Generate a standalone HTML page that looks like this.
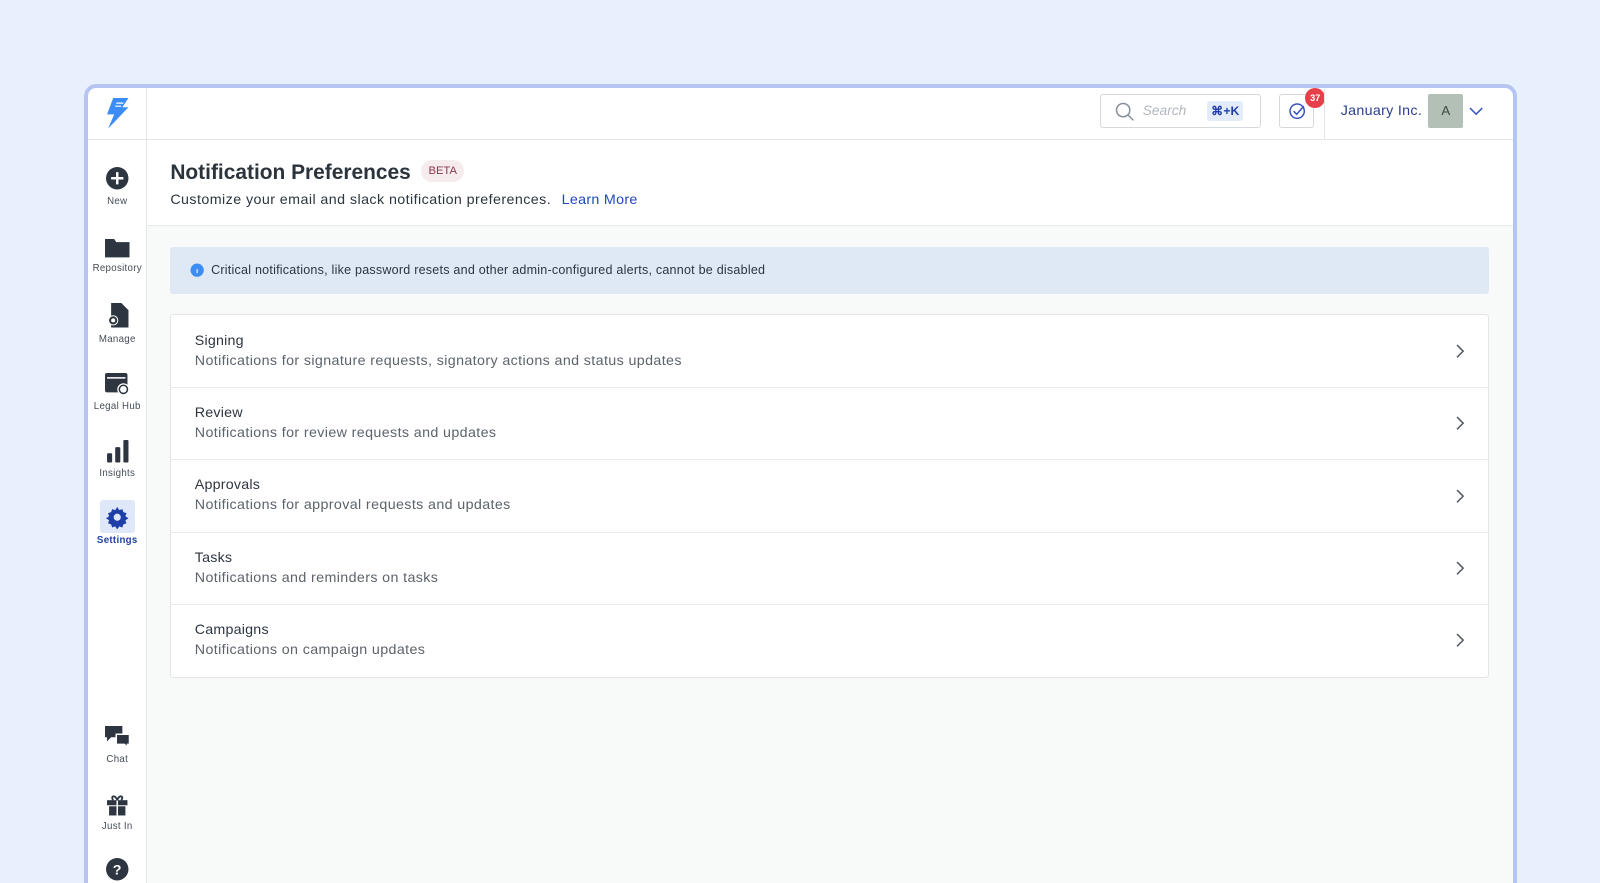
<!DOCTYPE html><html><head><style>
*{box-sizing:border-box;margin:0;padding:0}
html,body{width:1600px;height:883px;overflow:hidden}
body{background:#e8effd;font-family:"Liberation Sans",sans-serif;position:relative;color:#2d3540}
.wrap{position:absolute;left:0;top:0;width:1568px;height:870px;zoom:1.0204}
.frame{position:absolute;left:82px;top:82px;width:1405px;height:820px;border:4px solid #b6c4f2;border-radius:12px;background:#f8f9f9;overflow:hidden}
.side{position:absolute;left:0;top:0;width:58px;height:100%;background:#fff;border-right:1px solid #e3e5e8}
.logo{height:51px;border-bottom:1px solid #e3e5e8;display:flex;align-items:center;justify-content:center}
.nav{position:absolute;left:0;width:58px;text-align:center;font-size:9.5px;letter-spacing:.3px;color:#444c56}
.nav svg{display:block;margin:0 auto 5px}
.top{position:absolute;left:58px;top:0;right:0;height:51px;background:#fff;border-bottom:1px solid #e3e5e8}
.head{position:absolute;left:58px;top:51px;right:0;height:85px;background:#fff;border-bottom:1px solid #e8eaec}
.banner{position:absolute;left:81px;top:156px;width:1292px;height:46px;background:#dfe8f5;border-radius:3px;font-size:12.3px;letter-spacing:.22px;color:#2d3540;display:flex;align-items:center;padding-left:19px}
.list{position:absolute;left:81px;top:222px;width:1292px;background:#fff;border:1px solid #e3e5e8;border-radius:3px}
.row{height:71px;border-bottom:1px solid #e8eaec;padding:17px 23px;position:relative}
.row:last-child{border-bottom:none}
.row b{font-weight:normal;font-size:14px;letter-spacing:.2px;display:block;color:#2d3540}
.row span{font-size:14px;letter-spacing:.37px;color:#5c636b;display:block;margin-top:4px}
.row svg{position:absolute;right:22px;top:27px}
</style></head><body>
<div class="wrap">
<div class="frame">
<div class="side">
<div class="logo"><svg width="26" height="32" viewBox="0 0 26 32"><path d="M9 1h15l-6 9h6L4 31l6-14H3z" fill="#3b8df5"/><path d="M12 6h7M11 9h6" stroke="#fff" stroke-width="1.2"/></svg></div>
<div class="nav" style="top:77px"><svg width="24" height="24"><circle cx="12" cy="12" r="11" fill="#2d3540"/><path d="M12 6v12M6 12h12" stroke="#fff" stroke-width="2.4"/></svg>New</div>
<div class="nav" style="top:145px"><svg width="26" height="22"><path d="M1 3h9l2 3h13v15H1z" fill="#2d3540"/></svg>Repository</div>
<div class="nav" style="top:210px"><svg width="24" height="26"><path d="M6 1h10l7 7v17H6z" fill="#2d3540"/><circle cx="8" cy="18" r="5" fill="#fff"/><circle cx="8" cy="18" r="3" fill="none" stroke="#2d3540" stroke-width="2"/></svg>Manage</div>
<div class="nav" style="top:278px"><svg width="26" height="24"><rect x="1" y="2" width="22" height="19" rx="2" fill="#2d3540"/><rect x="3" y="6" width="18" height="1.5" fill="#fff"/><circle cx="19" cy="18" r="6" fill="#fff"/><circle cx="19" cy="18" r="4" fill="none" stroke="#2d3540" stroke-width="1.5"/></svg>Legal Hub</div>
<div class="nav" style="top:344px"><svg width="24" height="24"><rect x="2" y="14" width="5" height="9" rx="1" fill="#2d3540"/><rect x="10" y="8" width="5" height="15" rx="1" fill="#2d3540"/><rect x="18" y="1" width="5" height="22" rx="1" fill="#2d3540"/></svg>Insights</div>
<div style="position:absolute;left:12px;top:404px;width:34px;height:32px;background:#dfe8f9;border-radius:3px"></div>
<div class="nav" style="top:409px;color:#1f3fa8;font-weight:bold"><svg width="24" height="24" viewBox="0 0 24 24"><path d="M12 2l2 3 3-1 1 3 3 1-1 3 3 2-3 2 1 3-3 1-1 3-3-1-2 3-2-3-3 1-1-3-3-1 1-3-3-2 3-2-1-3 3-1 1-3 3 1z" fill="#1f3fa8"/><circle cx="12" cy="12" r="3.5" fill="#dfe8f9"/></svg>Settings</div>
<div class="nav" style="top:624px"><svg width="26" height="24"><path d="M1 2h17v11H7l-4 4v-4H1z" fill="#2d3540"/><path d="M12 10h13v10h-2v3l-3-3h-8z" fill="#2d3540" stroke="#fff" stroke-width="1.5"/></svg>Chat</div>
<div class="nav" style="top:690px"><svg width="24" height="24"><rect x="2" y="8" width="20" height="5" fill="#2d3540"/><rect x="4" y="14" width="16" height="9" fill="#2d3540"/><path d="M12 8v15" stroke="#fff" stroke-width="1.5"/><path d="M12 8c-2-6-7-4-4 0M12 8c2-6 7-4 4 0" fill="none" stroke="#2d3540" stroke-width="1.8"/></svg>Just In</div>
<div class="nav" style="top:754px"><svg width="24" height="24"><circle cx="12" cy="12" r="11" fill="#2d3540"/><text x="12" y="17" font-size="14" font-weight="bold" fill="#fff" text-anchor="middle" font-family="Liberation Sans">?</text></svg></div>
</div>
<div class="top">
<div style="position:absolute;left:934px;top:6px;width:158px;height:34px;border:1px solid #d5d9de;border-radius:3px">
<svg style="position:absolute;left:14px;top:7px" width="20" height="20"><circle cx="8" cy="8" r="6.5" fill="none" stroke="#8a9099" stroke-width="1.5"/><path d="M13 13l5 5" stroke="#8a9099" stroke-width="1.5"/></svg>
<span style="position:absolute;left:41px;top:8px;font-size:13.5px;font-style:italic;color:#b2b7bd">Search</span>
<span style="position:absolute;left:104px;top:6px;background:#e4ecfb;color:#1f3fa8;font-size:12px;font-weight:bold;padding:3px 4px;border-radius:3px">⌘+K</span></div>
<div style="position:absolute;left:1110px;top:6px;width:34px;height:34px;border:1px solid #d5d9de;border-radius:3px"><svg style="position:absolute;left:7px;top:7px" width="20" height="18"><circle cx="9" cy="9" r="7" fill="none" stroke="#3a55c0" stroke-width="1.5"/><path d="M5.5 9l3 3 7-8" fill="none" stroke="#3a55c0" stroke-width="1.5"/></svg></div>
<div style="position:absolute;left:1135px;top:0;width:20px;height:20px;border-radius:50%;background:#e8404b;color:#fff;font-size:9px;font-weight:bold;text-align:center;line-height:20px">37</div>
<div style="position:absolute;left:1154px;top:0;width:1px;height:51px;background:#e3e5e8"></div>
<span style="position:absolute;left:1170px;top:15px;font-size:14px;letter-spacing:.3px;color:#2a3f8f">January Inc.</span>
<div style="position:absolute;left:1256px;top:6px;width:34px;height:34px;background:#b3c0b5;border-radius:2px;color:#3c4a40;font-size:13px;text-align:center;line-height:34px">A</div>
<svg style="position:absolute;left:1296px;top:18px" width="14" height="10"><path d="M1 2l6 6 6-6" fill="none" stroke="#3a55c0" stroke-width="1.5"/></svg>
</div>
<div class="head">
<div style="position:absolute;left:23px;top:21px;font-size:20.5px;font-weight:bold;color:#2b333d">Notification Preferences</div>
<div style="position:absolute;left:269px;top:20px;background:#f6ecee;color:#8a3a4e;font-size:11px;padding:5px 7px;border-radius:12px">BETA</div>
<div style="position:absolute;left:23px;top:51px;font-size:14px;letter-spacing:.42px;color:#2d3540">Customize your email and slack notification preferences. <span style="color:#1f48c0;margin-left:6px;letter-spacing:.3px">Learn More</span></div>
</div>
<div class="banner"><svg width="14" height="14" style="margin-right:7px"><circle cx="7" cy="7" r="6.5" fill="#3b8df5"/><path d="M7 6v4" stroke="#cfe0fb" stroke-width="1.4"/></svg>Critical notifications, like password resets and other admin-configured alerts, cannot be disabled</div>
<div class="list">
<div class="row"><b>Signing</b><span>Notifications for signature requests, signatory actions and status updates</span><svg width="10" height="16"><path d="M2 2l6 6-6 6" fill="none" stroke="#555c64" stroke-width="1.5"/></svg></div>
<div class="row"><b>Review</b><span>Notifications for review requests and updates</span><svg width="10" height="16"><path d="M2 2l6 6-6 6" fill="none" stroke="#555c64" stroke-width="1.5"/></svg></div>
<div class="row"><b>Approvals</b><span>Notifications for approval requests and updates</span><svg width="10" height="16"><path d="M2 2l6 6-6 6" fill="none" stroke="#555c64" stroke-width="1.5"/></svg></div>
<div class="row"><b>Tasks</b><span>Notifications and reminders on tasks</span><svg width="10" height="16"><path d="M2 2l6 6-6 6" fill="none" stroke="#555c64" stroke-width="1.5"/></svg></div>
<div class="row"><b>Campaigns</b><span>Notifications on campaign updates</span><svg width="10" height="16"><path d="M2 2l6 6-6 6" fill="none" stroke="#555c64" stroke-width="1.5"/></svg></div>
</div>
</div>
</div>
</body></html>
